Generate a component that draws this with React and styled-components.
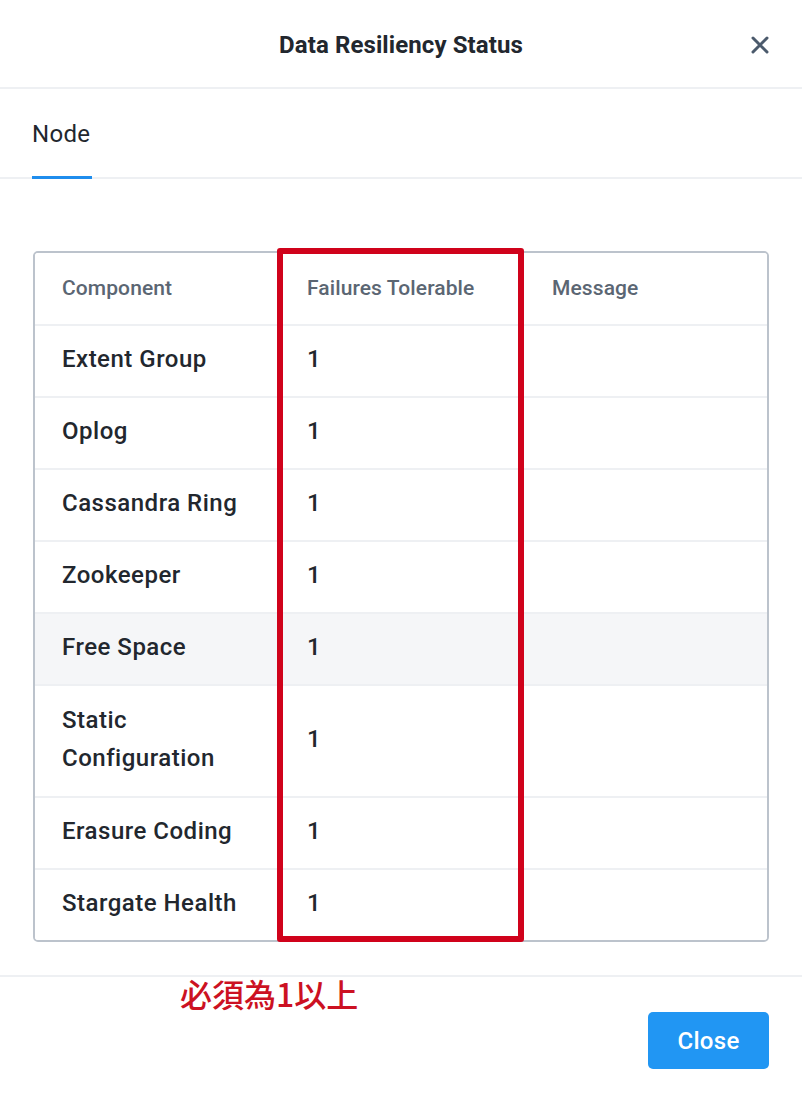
import React from "react";
import styled, { createGlobalStyle } from "styled-components";

const Global = createGlobalStyle`
  html, body { margin: 0; padding: 0; background: #fff; }
  body { font-family: Roboto, "Open Sans", "Noto Sans CJK TC", sans-serif; color: #22272e; }
  * { box-sizing: border-box; }
`;

const Modal = styled.div`
  width: 802px;
  height: 1102px;
  background: #fff;
  display: flex;
  flex-direction: column;
`;

const Header = styled.header`
  height: 89px;
  border-bottom: 2px solid #eef0f3;
  display: flex;
  align-items: center;
  justify-content: center;
  position: relative;
`;

const Title = styled.h1`
  margin: 2px 0 0 0;
  font-size: 24px;
  font-weight: 700;
  color: #22272e;
  letter-spacing: 0.1px;
`;

const CloseX = styled.button`
  position: absolute;
  right: 32px;
  top: 35px;
  width: 20px;
  height: 20px;
  padding: 0;
  border: 0;
  background: none;
  display: flex;
  align-items: center;
  justify-content: center;
`;

const TabBar = styled.nav`
  height: 90px;
  border-bottom: 2px solid #eef0f3;
  padding: 0 32px;
  display: flex;
  align-items: flex-end;
`;

const Tab = styled.div`
  font-size: 24px;
  font-weight: 400;
  color: #22272e;
  padding-bottom: 28px;
  border-bottom: 3px solid #1f8ded;
  margin-bottom: -2px;
  width: 60px;
  letter-spacing: 0.3px;
`;

const Body = styled.main`
  padding: 72px 33px 0 33px;
  height: 798px;
  border-bottom: 2px solid #eef0f3;
`;

const TableWrap = styled.div`
  position: relative;
`;

const Table = styled.div`
  border: 2px solid #bcc3cc;
  border-radius: 5px;
  overflow: hidden;
`;

const Row = styled.div`
  display: grid;
  grid-template-columns: 245px 245px 1fr;
  height: ${(p) => p.$h || 72}px;
  background: ${(p) => (p.$hl ? "#f5f6f8" : "#fff")};
  border-top: ${(p) => (p.$first ? "none" : "2px solid #eef0f3")};
`;

const Cell = styled.div`
  display: flex;
  align-items: center;
  padding: 0 0 4px 27px;
  font-size: 24px;
  font-weight: 500;
  line-height: 38px;
  color: #22272e;
  letter-spacing: 0.5px;
`;

const HeadCell = styled(Cell)`
  padding-bottom: 2px;
  font-size: 21px;
  color: #5b6673;
  font-weight: 500;
  letter-spacing: 0.1px;
`;

const Highlight = styled.div`
  position: absolute;
  left: 244px;
  top: -3px;
  width: 247px;
  bottom: 0px;
  border: 6px solid #d0021b;
  border-radius: 3px;
  pointer-events: none;
`;

const Footer = styled.footer`
  position: relative;
  flex: 1;
  display: flex;
  justify-content: flex-end;
  align-items: flex-start;
  padding: 35px 33px 0 0;
`;

const Note = styled.div`
  position: absolute;
  left: 180px;
  top: -7px;
  font-family: "Noto Sans CJK TC", "Noto Sans", sans-serif;
  font-size: 32px;
  font-weight: 500;
  color: #cc1122;
  letter-spacing: 0;
`;

const Button = styled.button`
  width: 121px;
  height: 57px;
  background: #2196f3;
  color: #fff;
  border: 0;
  border-radius: 5px;
  font-family: Roboto, sans-serif;
  font-weight: 500;
  font-size: 24px;
  letter-spacing: 0.3px;
`;

const rows = [
  "Extent Group",
  "Oplog",
  "Cassandra Ring",
  "Zookeeper",
  "Free Space",
  "Static Configuration",
  "Erasure Coding",
  "Stargate Health",
];

export default function App() {
  return (
    <Modal>
      <Global />
      <Header>
        <Title>Data Resiliency Status</Title>
        <CloseX aria-label="close">
          <svg width="18" height="18" viewBox="0 0 18 18">
            <path d="M2 2 L16 16 M16 2 L2 16" stroke="#4b5a6c" strokeWidth="3" strokeLinecap="round" />
          </svg>
        </CloseX>
      </Header>
      <TabBar>
        <Tab>Node</Tab>
      </TabBar>
      <Body>
        <TableWrap>
          <Table>
            <Row $first $h={71}>
              <HeadCell>Component</HeadCell>
              <HeadCell>Failures Tolerable</HeadCell>
              <HeadCell>Message</HeadCell>
            </Row>
            {rows.map((r) => (
              <Row key={r} $hl={r === "Free Space"} $h={r === "Static Configuration" ? 112 : 72}>
                <Cell>{r === "Static Configuration" ? <span>Static<br />Configuration</span> : r}</Cell>
                <Cell>1</Cell>
                <Cell />
              </Row>
            ))}
          </Table>
          <Highlight />
        </TableWrap>
      </Body>
      <Footer>
        <Note>必須為1以上</Note>
        <Button>Close</Button>
      </Footer>
    </Modal>
  );
}
